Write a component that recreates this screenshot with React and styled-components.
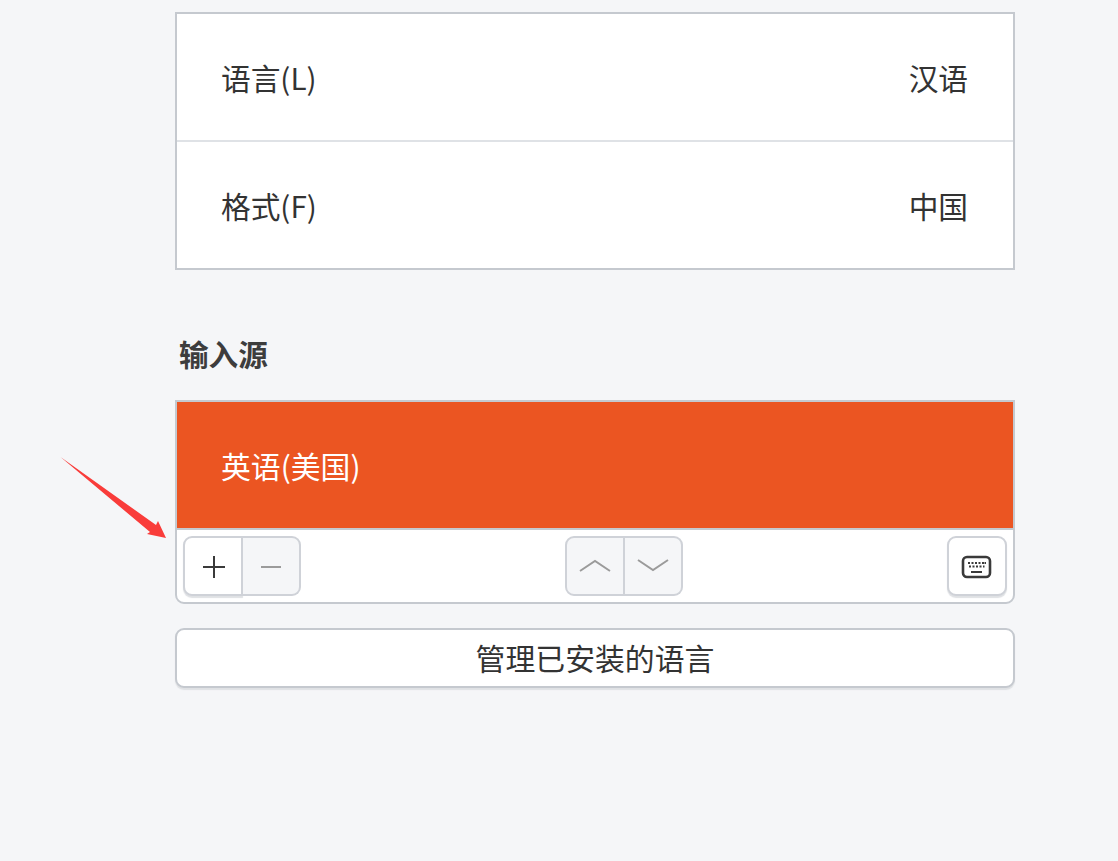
import React from 'react'
import styled, { createGlobalStyle } from 'styled-components'

const GlobalStyle = createGlobalStyle`
  html, body {
    margin: 0;
    padding: 0;
    background: #f5f6f8;
  }
  body {
    font-family: "Noto Sans CJK SC", "Noto Sans", sans-serif;
    color: #333;
  }
`

const Page = styled.div`
  position: relative;
  width: 1118px;
  height: 861px;
  box-sizing: border-box;
  padding: 12px 103px 0 175px;
  overflow: hidden;
`

const List = styled.div`
  border: 2px solid #c5c9cf;
  background: #fff;
`

const Row = styled.div`
  display: flex;
  align-items: center;
  justify-content: space-between;
  box-sizing: border-box;
  height: ${(p) => p.$height}px;
  padding: 2px 45px 0 44px;
  font-size: 29.7px;
  line-height: 1;
  ${(p) => p.$divided && 'border-top: 2px solid #dfe2e6;'}
`

const Heading = styled.h3`
  margin: 62px 0 24px 4px;
  font-size: 29.6px;
  line-height: 44px;
  font-weight: 700;
  color: #3d3d3d;
`

const Sources = styled.div`
  border: 2px solid #c5c9cf;
  border-radius: 0 0 9px 9px;
  background: #fff;
`

const SelectedRow = styled.div`
  display: flex;
  align-items: center;
  box-sizing: border-box;
  height: 128px;
  padding: 0 44px;
  background: #eb5522;
  border-bottom: 2px solid #c5c9cf;
  color: #fff;
  font-size: 29.85px;
`

const Toolbar = styled.div`
  display: flex;
  align-items: center;
  justify-content: space-between;
  height: 72px;
  padding: 0 6px;
`

const Group = styled.div`
  display: flex;
`

const ToolButton = styled.div`
  display: flex;
  align-items: center;
  justify-content: center;
  box-sizing: border-box;
  width: 58px;
  height: 60px;
  border: 2px solid #cfd2d8;
  background: ${(p) => (p.$disabled ? '#f5f6f8' : '#fff')};
  box-shadow: ${(p) => (p.$disabled ? 'none' : '0 2px 1px #dfe1e4')};
  color: ${(p) => (p.$disabled ? '#9b9b9b' : '#3a3a3a')};
  & + & {
    border-left: 0;
  }
  &:first-child {
    width: 60px;
    border-radius: 9px 0 0 9px;
  }
  &:last-child {
    border-radius: 0 9px 9px 0;
  }
  &:only-child {
    width: 60px;
    border-radius: 9px;
  }
`

const ManageButton = styled.div`
  display: flex;
  align-items: center;
  justify-content: center;
  box-sizing: border-box;
  height: 60px;
  margin-top: 24px;
  padding-bottom: 2px;
  border: 2px solid #c5c9cf;
  border-radius: 9px;
  background: #fff;
  box-shadow: 0 2px 1px #dfe1e4;
  font-size: 29.85px;
  color: #333;
`

const ArrowMark = styled.svg`
  position: absolute;
  left: 55px;
  top: 452px;
`

const Glyph = styled.svg`
  display: block;
  fill: none;
  stroke: currentColor;
  stroke-width: 2;
`

function PlusIcon() {
  return (
    <Glyph width="26" height="26" viewBox="0 0 26 26">
      <path d="M3 14h22M14 3v22" />
    </Glyph>
  )
}

function MinusIcon() {
  return (
    <Glyph width="24" height="26" viewBox="0 0 24 26">
      <path d="M2 14h20" />
    </Glyph>
  )
}

function UpIcon() {
  return (
    <Glyph width="34" height="16" viewBox="0 0 34 16">
      <path d="M2 13 L17 3 L32 13" />
    </Glyph>
  )
}

function DownIcon() {
  return (
    <Glyph width="36" height="16" viewBox="0 0 36 16">
      <path d="M3 2 L18 12 L33 2" />
    </Glyph>
  )
}

function KeyboardIcon() {
  return (
    <svg width="32" height="26" viewBox="0 0 32 26">
      <rect x="2" y="4" width="27" height="20" rx="4" fill="none" stroke="#3a3a3a" strokeWidth="2.6" />
      <path
        d="M7 10h2M10.5 10h2M14 10h2M17.5 10h2M21 10h2M23.5 10h1.5M8 13.5h2M11.5 13.5h2M15 13.5h2M18.5 13.5h2M22 13.5h1.5M10 19h11"
        stroke="#3a3a3a"
        strokeWidth="1.8"
        fill="none"
      />
    </svg>
  )
}

export default function App() {
  return (
    <Page>
      <GlobalStyle />
      <List>
        <Row $height={126}>
          <span>语言(L)</span>
          <span>汉语</span>
        </Row>
        <Row $height={128} $divided>
          <span>格式(F)</span>
          <span>中国</span>
        </Row>
      </List>
      <Heading>输入源</Heading>
      <Sources>
        <SelectedRow>英语(美国)</SelectedRow>
        <Toolbar>
          <Group>
            <ToolButton><PlusIcon /></ToolButton>
            <ToolButton $disabled><MinusIcon /></ToolButton>
          </Group>
          <Group>
            <ToolButton $disabled><UpIcon /></ToolButton>
            <ToolButton $disabled><DownIcon /></ToolButton>
          </Group>
          <Group>
            <ToolButton><KeyboardIcon /></ToolButton>
          </Group>
        </Toolbar>
      </Sources>
      <ManageButton>管理已安装的语言</ManageButton>
      <ArrowMark width="115" height="90" viewBox="0 0 115 90">
        <path d="M5.5 5 L95 80 L92 82 L111 86 L103 69 L101 73 Z" fill="#f93c3a" />
      </ArrowMark>
    </Page>
  )
}
